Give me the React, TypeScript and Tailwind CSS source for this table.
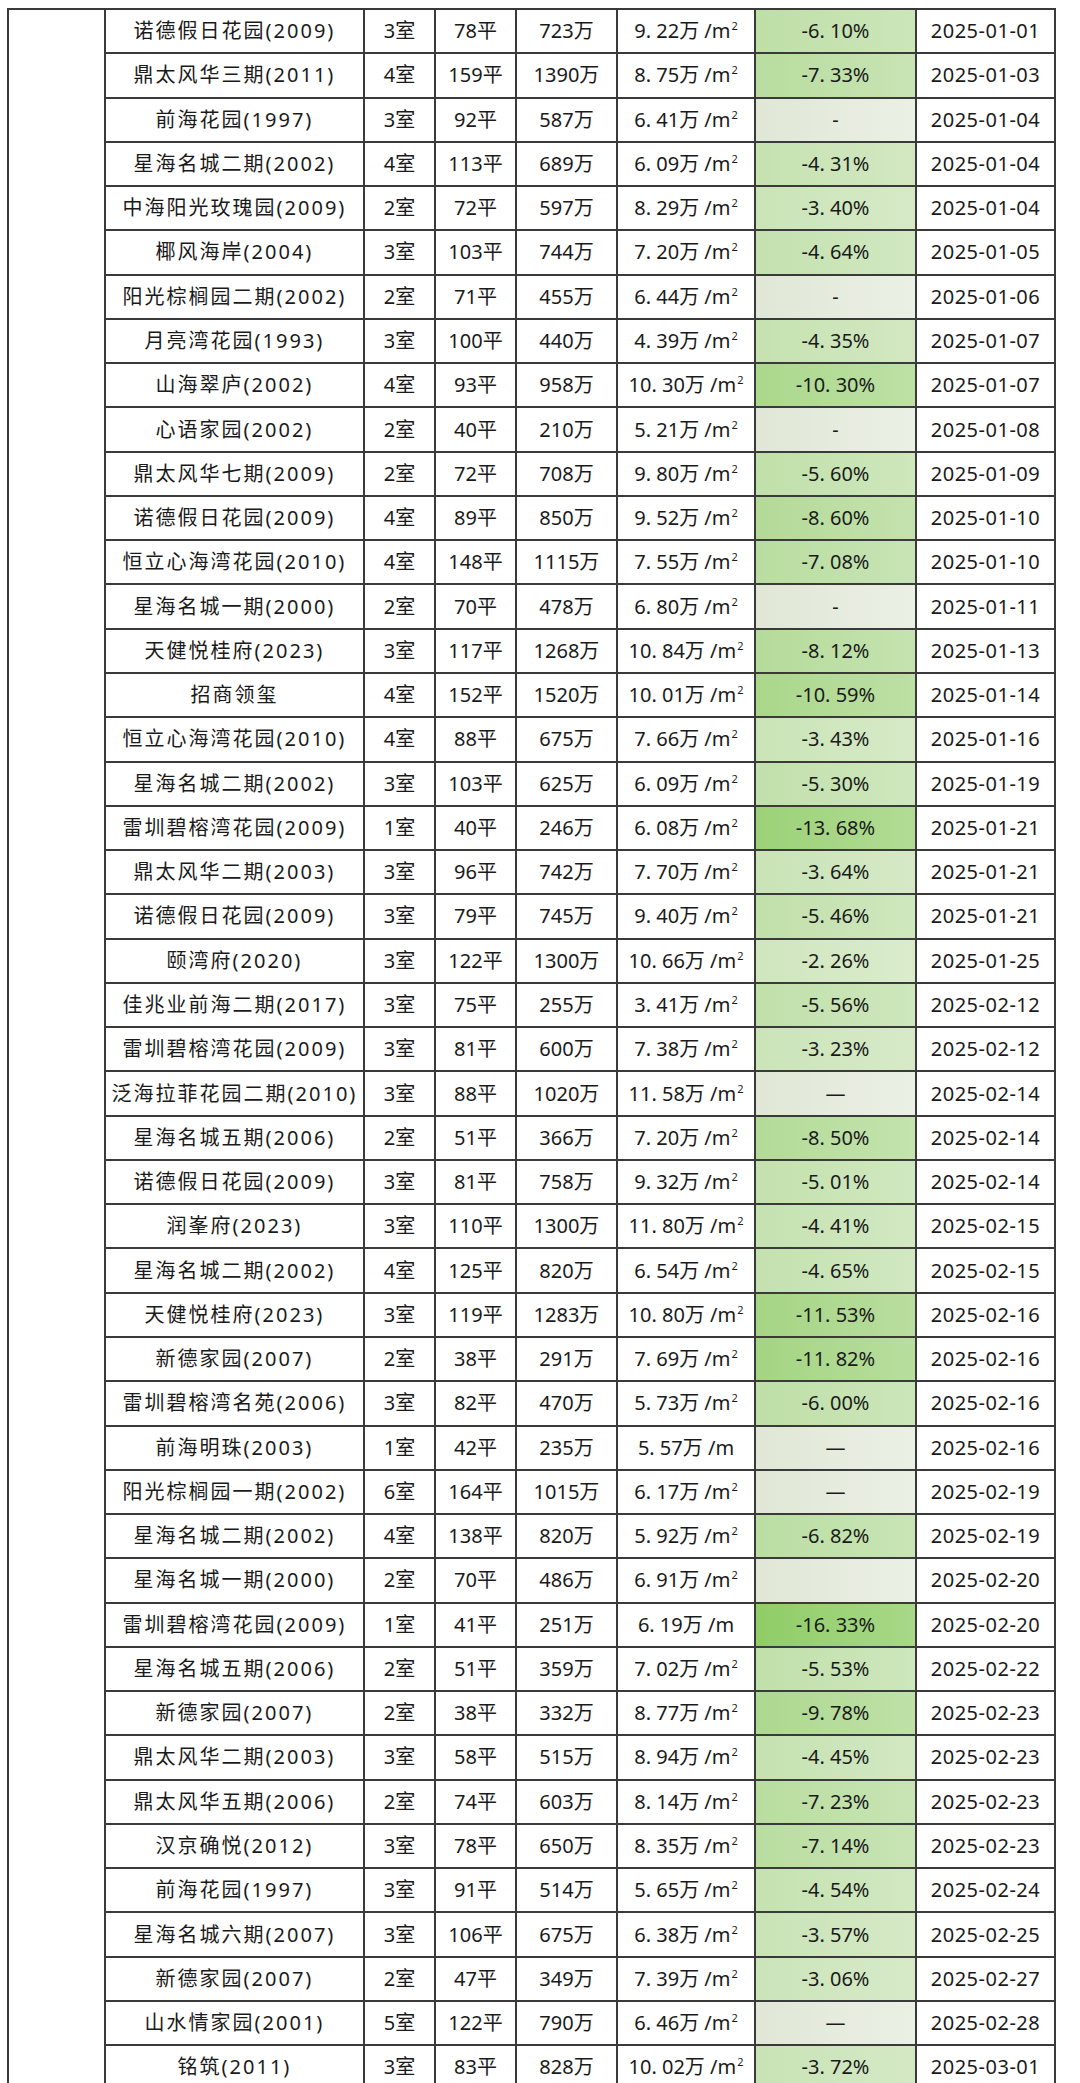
import React from "react";

type Row = [string, string, string, string, string, string, string, boolean?];

// name, rooms, area, total, unit price, change, date, unit without "²"
const rows: Row[] = [
  ["诺德假日花园(2009)", "3室", "78平", "723万", "9. 22", "-6. 10%", "2025-01-01"],
  ["鼎太风华三期(2011)", "4室", "159平", "1390万", "8. 75", "-7. 33%", "2025-01-03"],
  ["前海花园(1997)", "3室", "92平", "587万", "6. 41", "-", "2025-01-04"],
  ["星海名城二期(2002)", "4室", "113平", "689万", "6. 09", "-4. 31%", "2025-01-04"],
  ["中海阳光玫瑰园(2009)", "2室", "72平", "597万", "8. 29", "-3. 40%", "2025-01-04"],
  ["椰风海岸(2004)", "3室", "103平", "744万", "7. 20", "-4. 64%", "2025-01-05"],
  ["阳光棕榈园二期(2002)", "2室", "71平", "455万", "6. 44", "-", "2025-01-06"],
  ["月亮湾花园(1993)", "3室", "100平", "440万", "4. 39", "-4. 35%", "2025-01-07"],
  ["山海翠庐(2002)", "4室", "93平", "958万", "10. 30", "-10. 30%", "2025-01-07"],
  ["心语家园(2002)", "2室", "40平", "210万", "5. 21", "-", "2025-01-08"],
  ["鼎太风华七期(2009)", "2室", "72平", "708万", "9. 80", "-5. 60%", "2025-01-09"],
  ["诺德假日花园(2009)", "4室", "89平", "850万", "9. 52", "-8. 60%", "2025-01-10"],
  ["恒立心海湾花园(2010)", "4室", "148平", "1115万", "7. 55", "-7. 08%", "2025-01-10"],
  ["星海名城一期(2000)", "2室", "70平", "478万", "6. 80", "-", "2025-01-11"],
  ["天健悦桂府(2023)", "3室", "117平", "1268万", "10. 84", "-8. 12%", "2025-01-13"],
  ["招商领玺", "4室", "152平", "1520万", "10. 01", "-10. 59%", "2025-01-14"],
  ["恒立心海湾花园(2010)", "4室", "88平", "675万", "7. 66", "-3. 43%", "2025-01-16"],
  ["星海名城二期(2002)", "3室", "103平", "625万", "6. 09", "-5. 30%", "2025-01-19"],
  ["雷圳碧榕湾花园(2009)", "1室", "40平", "246万", "6. 08", "-13. 68%", "2025-01-21"],
  ["鼎太风华二期(2003)", "3室", "96平", "742万", "7. 70", "-3. 64%", "2025-01-21"],
  ["诺德假日花园(2009)", "3室", "79平", "745万", "9. 40", "-5. 46%", "2025-01-21"],
  ["颐湾府(2020)", "3室", "122平", "1300万", "10. 66", "-2. 26%", "2025-01-25"],
  ["佳兆业前海二期(2017)", "3室", "75平", "255万", "3. 41", "-5. 56%", "2025-02-12"],
  ["雷圳碧榕湾花园(2009)", "3室", "81平", "600万", "7. 38", "-3. 23%", "2025-02-12"],
  ["泛海拉菲花园二期(2010)", "3室", "88平", "1020万", "11. 58", "—", "2025-02-14"],
  ["星海名城五期(2006)", "2室", "51平", "366万", "7. 20", "-8. 50%", "2025-02-14"],
  ["诺德假日花园(2009)", "3室", "81平", "758万", "9. 32", "-5. 01%", "2025-02-14"],
  ["润峯府(2023)", "3室", "110平", "1300万", "11. 80", "-4. 41%", "2025-02-15"],
  ["星海名城二期(2002)", "4室", "125平", "820万", "6. 54", "-4. 65%", "2025-02-15"],
  ["天健悦桂府(2023)", "3室", "119平", "1283万", "10. 80", "-11. 53%", "2025-02-16"],
  ["新德家园(2007)", "2室", "38平", "291万", "7. 69", "-11. 82%", "2025-02-16"],
  ["雷圳碧榕湾名苑(2006)", "3室", "82平", "470万", "5. 73", "-6. 00%", "2025-02-16"],
  ["前海明珠(2003)", "1室", "42平", "235万", "5. 57", "—", "2025-02-16", true],
  ["阳光棕榈园一期(2002)", "6室", "164平", "1015万", "6. 17", "—", "2025-02-19"],
  ["星海名城二期(2002)", "4室", "138平", "820万", "5. 92", "-6. 82%", "2025-02-19"],
  ["星海名城一期(2000)", "2室", "70平", "486万", "6. 91", "", "2025-02-20"],
  ["雷圳碧榕湾花园(2009)", "1室", "41平", "251万", "6. 19", "-16. 33%", "2025-02-20", true],
  ["星海名城五期(2006)", "2室", "51平", "359万", "7. 02", "-5. 53%", "2025-02-22"],
  ["新德家园(2007)", "2室", "38平", "332万", "8. 77", "-9. 78%", "2025-02-23"],
  ["鼎太风华二期(2003)", "3室", "58平", "515万", "8. 94", "-4. 45%", "2025-02-23"],
  ["鼎太风华五期(2006)", "2室", "74平", "603万", "8. 14", "-7. 23%", "2025-02-23"],
  ["汉京确悦(2012)", "3室", "78平", "650万", "8. 35", "-7. 14%", "2025-02-23"],
  ["前海花园(1997)", "3室", "91平", "514万", "5. 65", "-4. 54%", "2025-02-24"],
  ["星海名城六期(2007)", "3室", "106平", "675万", "6. 38", "-3. 57%", "2025-02-25"],
  ["新德家园(2007)", "2室", "47平", "349万", "7. 39", "-3. 06%", "2025-02-27"],
  ["山水情家园(2001)", "5室", "122平", "790万", "6. 46", "—", "2025-02-28"],
  ["铭筑(2011)", "3室", "83平", "828万", "10. 02", "-3. 72%", "2025-03-01"],
];

const mix = (a: number[], b: number[], t: number) =>
  a.map((v, i) => Math.round(v + (b[i] - v) * t));
const rgb = (c: number[]) => `rgb(${c[0]},${c[1]},${c[2]})`;

// color scale for the change column, stronger green for bigger drops
const changeBg = (change: string) => {
  const v = parseFloat(change.replace(/\s/g, ""));
  if (isNaN(v)) {
    return "linear-gradient(to right, #e0e7d6, #ebf0e5)";
  }
  const t = Math.min(Math.max((Math.abs(v) - 2) / 14.33, 0), 1);
  const left = mix([208, 230, 192], [144, 205, 102], t);
  const right = mix(left, [255, 255, 255], 0.22);
  return `linear-gradient(to right, ${rgb(left)}, ${rgb(right)})`;
};

const cell = "border-2 border-[#3a3a3a] text-center align-middle p-0 whitespace-nowrap";

const App = () => {
  return (
    <div
      className="w-[1080px] h-[2083px] overflow-hidden bg-white pt-[8px] pl-[7px] text-[#1a1a1a] text-[20px]"
      style={{ fontFamily: '"Noto Sans", "Noto Sans CJK SC", sans-serif' }}
    >
      <table className="table-fixed border-collapse w-[1047px]">
        <colgroup>
          <col className="w-[97px]" />
          <col className="w-[259px]" />
          <col className="w-[71px]" />
          <col className="w-[81px]" />
          <col className="w-[101px]" />
          <col className="w-[138px]" />
          <col className="w-[161px]" />
          <col className="w-[139px]" />
        </colgroup>
        <tbody>
          {rows.map((r, i) => (
            <tr key={i} className="h-[44.28px]">
              {i === 0 && <td rowSpan={rows.length} className={cell} />}
              <td className={`${cell} tracking-[2px]`}>{r[0]}</td>
              <td className={cell}>{r[1]}</td>
              <td className={cell}>{r[2]}</td>
              <td className={cell}>{r[3]}</td>
              <td className={cell}>
                {r[4]}万 /m
                {!r[7] && <sup className="text-[11px] -top-[8px] ml-[1px]">2</sup>}
              </td>
              <td className={cell} style={{ background: changeBg(r[5]) }}>
                {r[5]}
              </td>
              <td className={`${cell} tracking-[0.5px]`}>{r[6]}</td>
            </tr>
          ))}
        </tbody>
      </table>
    </div>
  );
};

export default App;
